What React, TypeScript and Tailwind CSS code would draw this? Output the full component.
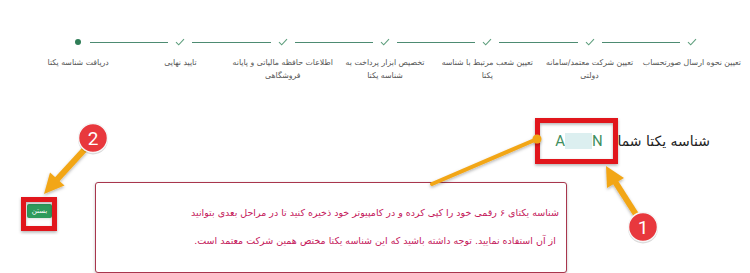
const STEPS = [
  ['تعیین نحوه ارسال صورتحساب'],
  ['تعیین شرکت معتمد/سامانه', 'دولتی'],
  ['تعیین شعب مرتبط با شناسه', 'یکتا'],
  ['تخصیص ابزار پرداخت به', 'شناسه یکتا'],
  ['اطلاعات حافظه مالیاتی و پایانه', 'فروشگاهی'],
  ['تایید نهایی'],
  ['دریافت شناسه یکتا'],
]

const FONT = { fontFamily: '"DejaVu Sans", "Noto Sans", sans-serif' }

function Check() {
  return (
    <svg width="10" height="8" viewBox="0 0 10 8" fill="none">
      <path d="M1 4.2 L3.7 6.8 L9 1.2" stroke="#5f9f7e" strokeWidth="1.1" />
    </svg>
  )
}

function Stepper() {
  return (
    <div className="grid grid-cols-7 w-[716px] mr-[7px] pt-[35px]">
      {STEPS.map((lines, i) => (
        <div key={i} className="flex flex-col items-center">
          <div className="flex items-center w-full h-[14px]">
            <div className={`flex-1 h-px me-[7px] ${i > 0 ? 'bg-[#4d8b72]' : ''}`} />
            <div className="w-[10px] flex justify-center">
              {i === 6 ? <div className="w-[6px] h-[6px] rounded-full bg-[#2f7d57]" /> : <Check />}
            </div>
            <div className={`flex-1 h-px ms-[7px] ${i < 6 ? 'bg-[#4d8b72]' : ''}`} />
          </div>
          <div className="mt-[7px] text-center text-[7.8px] leading-[13px] text-[#555] whitespace-nowrap">
            {lines.map((l, j) => (
              <div key={j}>{l}</div>
            ))}
          </div>
        </div>
      ))}
    </div>
  )
}

function Badge({ cx, cy, n }: { cx: number; cy: number; n: string }) {
  return (
    <g>
      <circle cx={cx} cy={cy + 1.5} r="15" fill="#000" opacity="0.15" />
      <circle cx={cx} cy={cy} r="14.5" fill="#e8383d" stroke="#f6f6f6" strokeWidth="1.5" />
      <text
        x={cx}
        y={cy + 6.5}
        textAnchor="middle"
        fontSize="19"
        fill="#fff"
        style={{ fontFamily: 'Roboto, "Liberation Sans", sans-serif' }}
      >
        {n}
      </text>
    </g>
  )
}

function Annotations() {
  const orange = '#f2a618'
  return (
    <svg className="absolute inset-0 pointer-events-none" width="750" height="273" viewBox="0 0 750 273">
      <defs>
        <filter id="sh" x="-20%" y="-20%" width="140%" height="140%">
          <feDropShadow dx="0" dy="1.5" stdDeviation="1.5" floodColor="#000" floodOpacity="0.3" />
        </filter>
      </defs>
      {/* red frames */}
      <rect x="537.5" y="120.5" width="78" height="41" fill="none" stroke="#e1141d" strokeWidth="5" filter="url(#sh)" />
      <rect x="23.5" y="199.5" width="31" height="29" fill="none" stroke="#e1141d" strokeWidth="5" filter="url(#sh)" />

      {/* connector from callout to frame */}
      <g filter="url(#sh)">
        <line x1="432" y1="184" x2="537" y2="139" stroke={orange} strokeWidth="4" strokeLinecap="round" />
        <circle cx="537" cy="139" r="4.5" fill={orange} />
      </g>

      {/* arrow 1 */}
      <g filter="url(#sh)">
        <line x1="637" y1="216" x2="615.5" y2="182.3" stroke={orange} strokeWidth="6" />
        <polygon points="606,166 624,178 607,188" fill={orange} />
      </g>

      {/* arrow 2 */}
      <g filter="url(#sh)">
        <line x1="85" y1="149" x2="57" y2="179.5" stroke={orange} strokeWidth="6" />
        <polygon points="44,194 50,172.5 64.5,185.5" fill={orange} />
      </g>

      <Badge cx={643} cy={227} n="1" />
      <Badge cx={93} cy={138} n="2" />
    </svg>
  )
}

export default function App() {
  return (
    <div className="relative w-[750px] h-[273px] bg-white overflow-hidden" dir="rtl" style={FONT}>
      <Stepper />

      <div className="mt-[49px] pr-[40px] flex items-center h-[20px] text-[14px] text-[#222]">
        <span>شناسه یکتا شما:</span>
        <span dir="ltr" className="mr-[10px] inline-flex items-center text-[#3f8f5f] text-[15px]" style={{ fontFamily: 'Roboto, sans-serif' }}>
          A<span className="inline-block w-[27px] h-[16px] bg-[#dceff0]" />N
        </span>
      </div>

      <div dir="ltr" className="mt-[31px] flex items-start">
        <div className="ml-[27px] mt-[22px] w-[25px] h-[14px] bg-[#2e9a5c] rounded-[2px] flex items-center justify-center text-white text-[7px] shadow-sm">
          <span dir="rtl">بستن</span>
        </div>
        <div className="ml-[43px] w-[472px] h-[91px] border border-[#a8364d] rounded-[3px] shadow-[0_1px_3px_rgba(0,0,0,0.25)] bg-white">
          <div dir="rtl" className="pt-[16px] pl-[88px] text-center text-[9.5px] leading-[28px] text-[#c4175a] whitespace-nowrap">
            <div>شناسه یکتای ۶ رقمی خود را کپی کرده و در کامپیوتر خود ذخیره کنید تا در مراحل بعدی بتوانید</div>
            <div>از آن استفاده نمایید. توجه داشته باشید که این شناسه یکتا مختص همین شرکت معتمد است.</div>
          </div>
        </div>
      </div>

      <Annotations />
    </div>
  )
}
